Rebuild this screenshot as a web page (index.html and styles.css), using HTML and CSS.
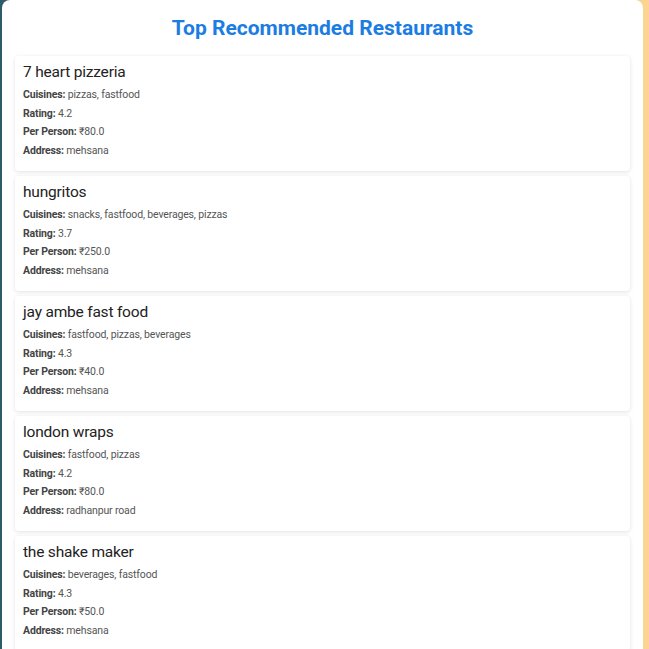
FILE: index.html
```html
<!DOCTYPE html>
<html lang="en">
<head>
<meta charset="utf-8">
<title>Top Recommended Restaurants</title>
<link rel="stylesheet" href="styles.css">
</head>
<body>
<main class="container">
  <h2 class="title">Top Recommended Restaurants</h2>
  <div class="list">
    <div class="card">
      <h3 class="name">7 heart pizzeria</h3>
      <p class="row"><b>Cuisines:</b> pizzas, fastfood</p>
      <p class="row"><b>Rating:</b> 4.2</p>
      <p class="row"><b>Per Person:</b> ₹80.0</p>
      <p class="row"><b>Address:</b> mehsana</p>
    </div>
    <div class="card">
      <h3 class="name">hungritos</h3>
      <p class="row"><b>Cuisines:</b> snacks, fastfood, beverages, pizzas</p>
      <p class="row"><b>Rating:</b> 3.7</p>
      <p class="row"><b>Per Person:</b> ₹250.0</p>
      <p class="row"><b>Address:</b> mehsana</p>
    </div>
    <div class="card">
      <h3 class="name">jay ambe fast food</h3>
      <p class="row"><b>Cuisines:</b> fastfood, pizzas, beverages</p>
      <p class="row"><b>Rating:</b> 4.3</p>
      <p class="row"><b>Per Person:</b> ₹40.0</p>
      <p class="row"><b>Address:</b> mehsana</p>
    </div>
    <div class="card">
      <h3 class="name">london wraps</h3>
      <p class="row"><b>Cuisines:</b> fastfood, pizzas</p>
      <p class="row"><b>Rating:</b> 4.2</p>
      <p class="row"><b>Per Person:</b> ₹80.0</p>
      <p class="row"><b>Address:</b> radhanpur road</p>
    </div>
    <div class="card">
      <h3 class="name">the shake maker</h3>
      <p class="row"><b>Cuisines:</b> beverages, fastfood</p>
      <p class="row"><b>Rating:</b> 4.3</p>
      <p class="row"><b>Per Person:</b> ₹50.0</p>
      <p class="row"><b>Address:</b> mehsana</p>
    </div>
  </div>
</main>
</body>
</html>
```
FILE: styles.css
```css
html {
  background: linear-gradient(to right, #2d5b68 0%, #7a9a8c 40%, #fcd592 100%);
  height: 100%;
}
body {
  margin: 0;
  font-family: Roboto, "Liberation Sans", Arial, sans-serif;
  overflow: hidden;
  height: 100%;
}
.container {
  margin-left: 2px;
  width: 641px;
  box-sizing: border-box;
  min-height: 100%;
  background: #fff;
  border-radius: 8px 8px 0 0;
  padding: 15px 13px 0 13px;
}
.title {
  margin: 0 0 15px;
  text-align: center;
  color: #1b7ce3;
  font-size: 21px;
  line-height: 26px;
  font-weight: bold;
}
.list {
  display: flex;
  flex-direction: column;
  gap: 5px;
}
.card {
  background: #fff;
  border-radius: 4px;
  box-shadow: 0 1px 4px rgba(0, 0, 0, 0.12);
  padding: 6px 8px 10px;
  height: 115px;
  box-sizing: border-box;
}
.name {
  margin: 0 0 4px;
  font-size: 15.5px;
  letter-spacing: -0.2px;
  line-height: 20px;
  font-weight: normal;
  color: #222;
}
.row {
  margin: 0;
  font-size: 10.5px;
  letter-spacing: -0.15px;
  line-height: 18.7px;
  color: #555;
}
.row b {
  color: #444;
}
```
